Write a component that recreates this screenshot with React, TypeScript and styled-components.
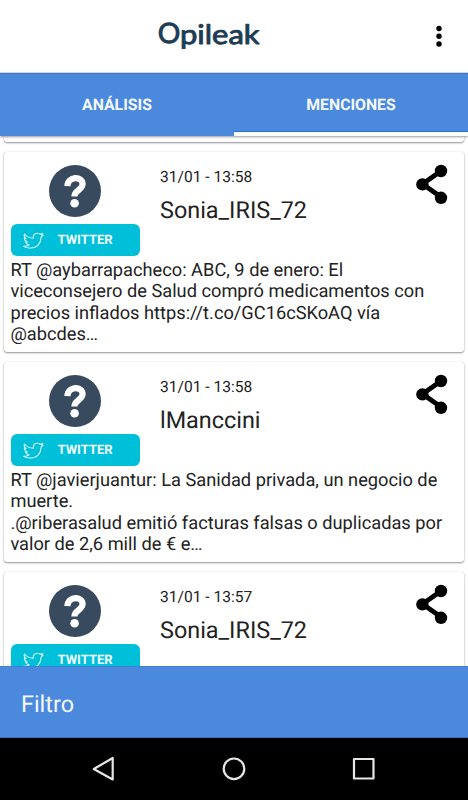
import React from 'react';
import styled, { createGlobalStyle } from 'styled-components';

const GlobalStyle = createGlobalStyle`
  * { box-sizing: border-box; }
  body { margin: 0; background: #fff; font-family: Roboto, sans-serif; text-rendering: geometricPrecision; }
`;

const Screen = styled.div`
  width: 468px;
  height: 800px;
  display: flex;
  flex-direction: column;
  overflow: hidden;
  background: #fff;
`;

const Header = styled.header`
  flex: none;
  height: 73px;
  display: grid;
  grid-template-columns: 1fr 58px;
  border-bottom: 1px solid #dcdcdc;
`;

const Logo = styled.svg`
  display: block;
  width: 110px;
  height: 40px;
  margin: 15px 0 0 155px;
  font-family: Lato, sans-serif;
  fill: #1d3c55;
  stroke: #1d3c55;
  stroke-width: 0.9;
  stroke-linejoin: round;
`;

const MenuButton = styled.button`
  border: 0;
  padding: 0;
  background: none;
  svg { display: block; margin-left: 19.4px; }
`;

const Tabs = styled.nav`
  flex: none;
  height: 63px;
  display: grid;
  grid-template-columns: 1fr 1fr;
  background: #4a89dc;
  border-top: 1px solid #2f7ad0;
  box-shadow: 0 1px 2px rgba(0, 0, 0, 0.4);
  z-index: 1;
`;

const Tab = styled.button<{ $active?: boolean }>`
  border: 0;
  padding: 4px 0 0;
  border-bottom: 4px solid ${(p) => (p.$active ? '#fff' : 'transparent')};
  background: none;
  box-shadow: ${(p) => (p.$active ? 'inset 0 -1px #1f74d0' : 'none')};
  color: #f4f8ff;
  font: 700 15.8px/20px Roboto, sans-serif;
  text-rendering: geometricPrecision;
`;

const List = styled.main`
  flex: 1;
  min-height: 0;
  padding: 0 4px;
  overflow: hidden;
`;

const Card = styled.article`
  height: 200px;
  margin-bottom: 10px;
  padding: 6px;
  border-radius: 3px;
  background: #fff;
  box-shadow: 0 1px 2px rgba(0, 0, 0, 0.42), 0 0 1px rgba(0, 0, 0, 0.2);
`;

const CardTail = styled(Card)`
  height: 6px;
  padding: 0;
  border-radius: 0 0 3px 3px;
`;

const CardHead = styled.div`
  height: 98px;
  display: grid;
  grid-template-columns: 150px 1fr 42px;
`;

const Source = styled.div`
  display: flex;
  flex-direction: column;
  padding-top: 7px;
`;

const Avatar = styled.svg`
  width: 52px;
  height: 52px;
  margin-left: 39.4px;
`;

const Badge = styled.div`
  width: 129.4px;
  height: 32px;
  margin: 7px 0 0 0.6px;
  padding: 1px 0 0 12px;
  display: flex;
  align-items: center;
  gap: 14px;
  border-radius: 6px;
  background: #00c0d9;
  color: #f3fdff;
  font: 700 13px/32px Roboto, sans-serif;
`;

const BadgeLabel = styled.span`
  padding-top: 1px;
`;

const Meta = styled.div`
  color: #222;
`;

const Stamp = styled.div`
  margin-top: 9px;
  font-size: 15.6px;
  line-height: 20px;
`;

const Author = styled.div`
  margin-top: 9px;
  font-size: 23.4px;
  line-height: 28px;
`;

const ShareButton = styled.button`
  align-self: start;
  margin-top: 6px;
  border: 0;
  padding: 0;
  background: none;
  svg { display: block; }
`;

const Message = styled.p`
  margin: 4px 0 0 0.4px;
  color: #222;
  font-size: 18.24px;
  line-height: 21.4px;
  white-space: pre;
`;

const Footer = styled.footer`
  flex: none;
  height: 72px;
  padding: 4px 21px 0;
  display: flex;
  align-items: center;
  background: #4a89dc;
  border-top: 1px solid #3b81d8;
  border-bottom: 1px solid #3d74bd;
  color: #f4f8ff;
  font-size: 23.4px;
  z-index: 1;
`;

const SystemBar = styled.div`
  flex: none;
  height: 62px;
  display: flex;
  align-items: center;
  justify-content: center;
  gap: 100px;
  background: #000;
  svg { width: 30px; height: 30px; fill: none; stroke: #e6e6e6; stroke-width: 2.2; stroke-linejoin: round; }
`;

const QuestionIcon = () => (
  <Avatar viewBox="0 0 52 52">
    <circle cx="26" cy="26" r="26" fill="#384a5e" />
    <path d="M18.4 21.2C18.7 10.6 33.6 10.8 33.6 19C33.6 25 25.4 25 25.4 31.6" fill="none" stroke="#fff" strokeWidth="6.2" />
    <circle cx="25.6" cy="38.3" r="4.3" fill="#fff" />
  </Avatar>
);

const BirdIcon = () => (
  <svg width="21" height="18" viewBox="0 0 21 18" fill="none" stroke="#d9f8fc" strokeWidth="1.1" strokeLinejoin="round">
    <path d="M1.5 2C4 5 7 6.1 10.3 6.2C10 2.9 12 1 14.6 1.2C16.2 1.2 17 2 17.4 2.2L19.7 1.4L18.6 3.2L20 3.4L18.1 5.1C18 11.3 14 16 7.8 16C5 16.2 2.5 15.6.7 14.4C3.5 14.5 5 13.7 6.1 12.9C4.2 12.5 3 11.5 2.5 10.1H4.2C2.5 9.3 1.4 8 1.3 6.1L3 6.5C1.2 5.2.8 3.8 1.5 2Z" />
  </svg>
);

const ShareIcon = () => (
  <svg width="34" height="40" viewBox="0 0 34 40">
    <path d="M25 7L6.5 20L25 33" fill="none" stroke="#000" strokeWidth="4.8" />
    <circle cx="25" cy="7" r="6.2" />
    <circle cx="6.4" cy="20.4" r="6.2" />
    <circle cx="25" cy="33.8" r="6.2" />
  </svg>
);

const mentions = [
  {
    stamp: '31/01 - 13:58',
    author: 'Sonia_IRIS_72',
    text: 'RT @aybarrapacheco: ABC, 9 de enero: El\nviceconsejero de Salud compró medicamentos con\nprecios inflados https://t.co/GC16cSKoAQ vía\n@abcdes…',
  },
  {
    stamp: '31/01 - 13:58',
    author: 'lManccini',
    text: 'RT @javierjuantur: La Sanidad privada, un negocio de\nmuerte.\n.@riberasalud emitió facturas falsas o duplicadas por\nvalor de 2,6 mill de € e…',
  },
  { stamp: '31/01 - 13:57', author: 'Sonia_IRIS_72', text: '' },
];

export default function App() {
  return (
    <Screen>
      <GlobalStyle />
      <Header>
        <Logo viewBox="0 0 110 40">
          <text x="2.7" y="28.3" fontSize="28" textLength="22.6" lengthAdjust="spacingAndGlyphs">O</text>
          <text x="25" y="29" fontSize="27" textLength="79.5" lengthAdjust="spacingAndGlyphs">pileak</text>
        </Logo>
        <MenuButton aria-label="Menu">
          <svg width="20" height="24" viewBox="0 0 20 24">
            <circle cx="10" cy="4.5" r="2.7" />
            <circle cx="10" cy="12.2" r="2.7" />
            <circle cx="10" cy="20" r="2.7" />
          </svg>
        </MenuButton>
      </Header>
      <Tabs>
        <Tab>ANÁLISIS</Tab>
        <Tab $active>MENCIONES</Tab>
      </Tabs>
      <List>
        <CardTail />
        {mentions.map((m, i) => (
          <Card key={i}>
            <CardHead>
              <Source>
                <QuestionIcon />
                <Badge><BirdIcon /><BadgeLabel>TWITTER</BadgeLabel></Badge>
              </Source>
              <Meta>
                <Stamp>{m.stamp}</Stamp>
                <Author>{m.author}</Author>
              </Meta>
              <ShareButton aria-label="Share"><ShareIcon /></ShareButton>
            </CardHead>
            <Message>{m.text}</Message>
          </Card>
        ))}
      </List>
      <Footer>Filtro</Footer>
      <SystemBar>
        <svg viewBox="0 0 30 30"><path d="M23.7 4V25.5L4.8 15Z" /></svg>
        <svg viewBox="0 0 30 30"><circle cx="15" cy="14.8" r="10.3" /></svg>
        <svg viewBox="0 0 30 30"><rect x="5" y="5" width="19.5" height="19.5" /></svg>
      </SystemBar>
    </Screen>
  );
}
